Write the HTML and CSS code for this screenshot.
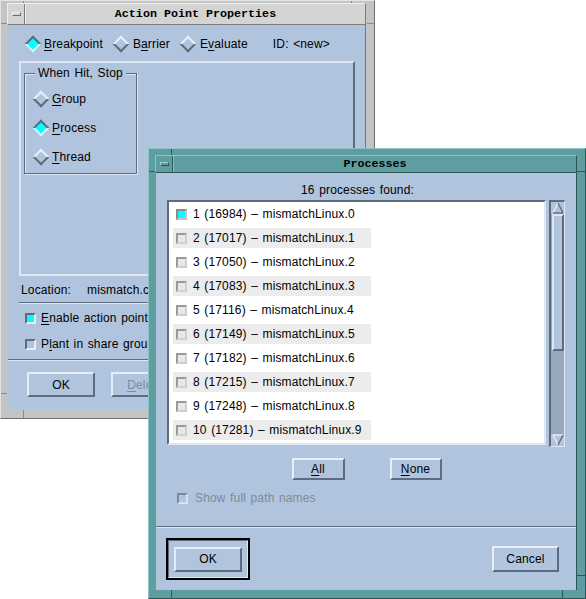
FILE: index.html
```html
<!DOCTYPE html>
<html>
<head>
<meta charset="utf-8">
<title>Action Point Properties</title>
<link rel="stylesheet" href="styles.css">
</head>
<body>
<div class="win win1">
  <span class="tick tk-t1"></span><span class="tick tk-t2"></span>
  <span class="tick tk-l1"></span><span class="tick tk-l2"></span>
  <span class="tick tk-r1"></span><span class="tick tk-b1"></span>
  <div class="titlebar tb1">
    <div class="menubtn"><span class="mbar"></span></div>
    <div class="title">Action Point Properties</div>
  </div>
  <div class="client c1">
    <div class="typerow">
      <div class="radio on"><span class="dia"></span><span><u>B</u>reakpoint</span></div>
      <div class="radio"><span class="dia"></span><span>B<u>a</u>rrier</span></div>
      <div class="radio"><span class="dia"></span><span>E<u>v</u>aluate</span></div>
      <span class="idtxt">ID: &lt;new&gt;</span>
    </div>
    <div class="etched">
      <div class="group">
        <span class="legend">When Hit, Stop</span>
        <div class="radio"><span class="dia"></span><span><u>G</u>roup</span></div>
        <div class="radio on"><span class="dia"></span><span><u>P</u>rocess</span></div>
        <div class="radio"><span class="dia"></span><span><u>T</u>hread</span></div>
      </div>
    </div>
    <div class="loc"><span class="loclbl">Location:</span><span>mismatch.c</span></div>
    <div class="sep sep-short"></div>
    <div class="check on chk-enable"><span class="cb"></span><span><u>E</u>nable action point</span></div>
    <div class="check chk-plant"><span class="cb"></span><span>P<u>l</u>ant in share group</span></div>
    <div class="sep sep-full"></div>
    <div class="btnrow1">
      <button class="btn b-ok1">OK</button>
      <button class="btn b-del dis"><u>D</u>elete</button>
    </div>
  </div>
</div>

<div class="win win2">
  <span class="tick2 t2-t1"></span><span class="tick2 t2-l1"></span>
  <span class="tick2 t2-r1"></span><span class="tick2 t2-b1"></span>
  <span class="tick2 t2-b2"></span><span class="tick2 t2-rb"></span>
  <div class="titlebar tb2">
    <div class="menubtn"><span class="mbar"></span></div>
    <div class="title">Processes</div>
  </div>
  <div class="client c2">
    <div class="found">16 processes found:</div>
    <div class="listwrap">
      <div class="list">
        <div class="row on"><span class="lcb"></span><span>1 (16984) – mismatchLinux.0</span></div>
        <div class="row alt"><span class="lcb"></span><span>2 (17017) – mismatchLinux.1</span></div>
        <div class="row"><span class="lcb"></span><span>3 (17050) – mismatchLinux.2</span></div>
        <div class="row alt"><span class="lcb"></span><span>4 (17083) – mismatchLinux.3</span></div>
        <div class="row"><span class="lcb"></span><span>5 (17116) – mismatchLinux.4</span></div>
        <div class="row alt"><span class="lcb"></span><span>6 (17149) – mismatchLinux.5</span></div>
        <div class="row"><span class="lcb"></span><span>7 (17182) – mismatchLinux.6</span></div>
        <div class="row alt"><span class="lcb"></span><span>8 (17215) – mismatchLinux.7</span></div>
        <div class="row"><span class="lcb"></span><span>9 (17248) – mismatchLinux.8</span></div>
        <div class="row alt"><span class="lcb"></span><span>10 (17281) – mismatchLinux.9</span></div>
      </div>
      <div class="sb">
        <div class="arrow">
          <svg width="12" height="12" viewBox="0 0 12 12"><polygon points="1,11 6,1 11,11" fill="#b0c4de"/><line x1="1" y1="11" x2="6" y2="1" stroke="#e6edf6" stroke-width="1.4"/><line x1="6" y1="1" x2="11" y2="11" stroke="#5e6b7c" stroke-width="1.4"/><line x1="1" y1="11" x2="11" y2="11" stroke="#5e6b7c" stroke-width="1.4"/></svg>
        </div>
        <div class="trough"><div class="thumb"></div></div>
        <div class="arrow">
          <svg width="12" height="12" viewBox="0 0 12 12"><polygon points="1,1 11,1 6,11" fill="#b0c4de"/><line x1="1" y1="1" x2="11" y2="1" stroke="#e6edf6" stroke-width="1.4"/><line x1="1" y1="1" x2="6" y2="11" stroke="#e6edf6" stroke-width="1.4"/><line x1="6" y1="11" x2="11" y2="1" stroke="#5e6b7c" stroke-width="1.4"/></svg>
        </div>
      </div>
    </div>
    <div class="btnrow2">
      <button class="btn b-all"><u>A</u>ll</button>
      <button class="btn b-none"><u>N</u>one</button>
    </div>
    <div class="check dis fullpath"><span class="cb"></span><span>Show full path names</span></div>
    <div class="sep sep-full2"></div>
    <div class="bottom">
      <div class="defbox"><div class="defring"><button class="btn b-ok2">OK</button></div></div>
      <button class="btn b-cancel">Cancel</button>
    </div>
  </div>
</div>
</body>
</html>
```

FILE: styles.css
```css
* { box-sizing: border-box; }

body {
  margin: 0;
  width: 586px;
  height: 599px;
  background: #ffffff;
  font-family: "Liberation Sans", Arial, sans-serif;
  font-size: 12px;
  letter-spacing: 0.15px;
  word-spacing: 1px;
  color: #000;
  overflow: hidden;
  position: relative;
}

u { text-decoration: underline; text-underline-offset: 2px; }

.win { position: absolute; display: flex; flex-direction: column; }

/* ---------- window 1 ---------- */
.win1 {
  left: 0; top: 0;
  width: 375px; height: 419px;
  background: #c4c4c4;
  border: 1px solid;
  border-color: #e4e4e4 #707070 #707070 #e4e4e4;
  padding: 2px 8px 9px 6px;
}

.tick { position: absolute; background: #8a8a8a; }
.tk-t1 { left: 22px; top: 0; width: 1px; height: 2px; }
.tk-t2 { left: 350px; top: 0; width: 1px; height: 2px; }
.tk-l1 { left: 0; top: 22px; width: 6px; height: 1px; }
.tk-l2 { left: 0; top: 392px; width: 6px; height: 1px; }
.tk-r1 { right: 0; top: 22px; width: 7px; height: 1px; }
.tk-b1 { left: 22px; bottom: 0; width: 1px; height: 8px; }

.titlebar {
  display: flex;
  flex: none;
  border: 1px solid;
}
.tb1 {
  height: 22px;
  background: #d4d4d4;
  border-color: #ececec #7c7c7c #7c7c7c #ececec;
}
.menubtn {
  width: 17px;
  flex: none;
  display: flex;
  align-items: center;
  justify-content: center;
  border-right: 1px solid #7c7c7c;
}
.mbar {
  width: 9px; height: 4px;
  border: 1px solid;
  border-color: #f0f0f0 #6c6c6c #6c6c6c #f0f0f0;
}
.title {
  flex: 1;
  text-align: center;
  font-family: "Liberation Mono", "DejaVu Sans Mono", monospace;
  font-weight: bold;
  font-size: 11.7px;
  letter-spacing: 0;
  word-spacing: 0;
  line-height: 20px;
  border-left: 1px solid #ececec;
}

.client {
  background: #b0c4de;
  flex: none;
  display: flex;
  flex-direction: column;
}
.c1 {
  margin-left: 1px;
  height: 384px;
  border-right: 1px solid #6e7a88;
}

.typerow {
  display: flex;
  align-items: center;
  gap: 12px;
  height: 16px;
  margin-top: 11px;
  padding-left: 18px;
}
.idtxt { margin-left: 13px; }

.radio {
  display: flex;
  align-items: center;
  gap: 5px;
  height: 16px;
  white-space: nowrap;
}
.dia {
  width: 13px; height: 13px;
  flex: none;
  display: flex;
  align-items: center;
  justify-content: center;
}
.dia::before {
  content: "";
  width: 8px; height: 8px;
  transform: rotate(45deg);
  border: 2px solid;
  border-color: #e8eef6 #5e6b7c #5e6b7c #e8eef6;
  background: #b0c4de;
}
.radio.on .dia::before {
  border-color: #5e6b7c #e8eef6 #e8eef6 #5e6b7c;
  background: #00ffff;
}

.etched {
  margin: 9px 0 0 11px;
  width: 336px;
  height: 215px;
  border: 2px solid;
  border-color: #dde6f1 #5e6b7c #dde6f1 #dde6f1;
  padding: 10px 0 0 3px;
}
.group {
  position: relative;
  width: 113px;
  height: 101px;
  border: 1px solid #5e6b7c;
  box-shadow: 1px 1px 0 #dde6f1, inset 1px 1px 0 #dde6f1;
  display: flex;
  flex-direction: column;
  gap: 13px;
  padding: 17px 0 0 9px;
}
.legend {
  position: absolute;
  left: 10px;
  top: -8px;
  padding: 0 3px;
  background: #b0c4de;
  line-height: 14px;
  white-space: nowrap;
}

.loc {
  display: flex;
  margin: 7px 0 0 13px;
  height: 14px;
  line-height: 14px;
  white-space: nowrap;
}
.loclbl { width: 66px; }

.sep {
  height: 2px;
  border-top: 1px solid #5e6b7c;
  border-bottom: 1px solid #dde6f1;
  flex: none;
}
.sep-short { margin: 5px 0 0 11px; }

.check {
  display: flex;
  align-items: center;
  gap: 5px;
  height: 14px;
  white-space: nowrap;
}
.chk-enable { margin: 7px 0 0 17px; }
.chk-plant { margin: 12px 0 0 17px; }
.sep-full { margin-top: 8px; }

.cb {
  width: 11px; height: 11px;
  flex: none;
  border: 2px solid;
  border-color: #5e6b7c #e8eef6 #e8eef6 #5e6b7c;
  background: #b0c4de;
}
.check.on .cb { background: #00ffff; }
.check.dis { color: #7f8a99; }
.check.dis .cb { border-color: #7f8a99 #d8e1ec #d8e1ec #7f8a99; }

.btn {
  font-family: "Liberation Sans", Arial, sans-serif;
  font-size: 12px;
  letter-spacing: 0.15px;
  color: #000;
  background: #b0c4de;
  border: 2px solid;
  border-color: #e6edf6 #5e6b7c #5e6b7c #e6edf6;
  padding: 0;
  margin: 0;
  display: flex;
  align-items: center;
  justify-content: center;
  flex: none;
}
.btn.dis { color: #7f8a99; }

.btnrow1 {
  display: flex;
  gap: 16px;
  margin: 11px 0 0 19px;
}
.b-ok1, .b-del { width: 68px; height: 25px; }

/* ---------- window 2 ---------- */
.win2 {
  left: 148px; top: 148px;
  width: 438px; height: 451px;
  background: #5f9ea0;
  border: 1px solid;
  border-color: #8ec3c4 #2c5656 #2c5656 #8ec3c4;
  padding: 6px 8px 8px 6px;
}
.tick2 { position: absolute; background: #2c5656; }
.t2-t1 { left: 22px; top: 0; width: 1px; height: 6px; }
.t2-l1 { left: 0; top: 22px; width: 6px; height: 1px; }
.t2-r1 { right: 0; top: 22px; width: 8px; height: 1px; }
.t2-b1 { left: 22px; bottom: 0; width: 1px; height: 8px; }
.t2-b2 { right: 22px; bottom: 0; width: 1px; height: 8px; }
.t2-rb { right: 0; bottom: 22px; width: 8px; height: 1px; }

.tb2 {
  height: 18px;
  background: #5f9ea0;
  border-color: #8ec3c4 #2c5656 #2c5656 #8ec3c4;
}
.tb2 .menubtn { border-right-color: #2c5656; }
.tb2 .mbar { border-color: #9fd0d0 #2c5656 #2c5656 #9fd0d0; }
.tb2 .title { line-height: 16px; border-left-color: #8ec3c4; }

.c2 {
  margin-left: 1px;
  height: 417px;
  border-right: 1px solid #2c5656;
}

.found {
  margin: 10px 0 0 12px;
  width: 379px;
  text-align: center;
  line-height: 14px;
  height: 14px;
}

.listwrap {
  display: flex;
  gap: 3px;
  margin: 3px 0 0 11px;
  height: 245px;
}
.list {
  width: 379px;
  height: 245px;
  background: #fff;
  border: 2px solid;
  border-color: #5e6b7c #dde6f1 #dde6f1 #5e6b7c;
  padding: 2px 4px;
  display: flex;
  flex-direction: column;
  gap: 4px;
}
.row {
  width: 198px;
  height: 20px;
  display: flex;
  align-items: center;
  gap: 6px;
  padding-left: 3px;
  white-space: nowrap;
  flex: none;
}
.row.alt { background: #ececec; }
.lcb {
  width: 11px; height: 11px;
  flex: none;
  border: 2px solid;
  border-color: #9a9a9a #cfcfcf #cfcfcf #9a9a9a;
  background: #e8e8e8;
}
.row.on .lcb { background: #00ffff; border-color: #8a8a8a #c4c4c4 #c4c4c4 #8a8a8a; }

.sb {
  width: 16px;
  height: 247px;
  border: 2px solid;
  border-color: #5e6b7c #dde6f1 #dde6f1 #5e6b7c;
  border-right-width: 1px;
  border-bottom-width: 1px;
  display: flex;
  flex-direction: column;
  background: #b0c4de;
}
.arrow {
  height: 12px;
  display: flex;
  justify-content: center;
  flex: none;
}
.trough {
  flex: 1;
  background: #97a7be;
  display: flex;
  flex-direction: column;
}
.thumb {
  height: 137px;
  background: #b0c4de;
  border: 2px solid;
  border-color: #dde6f1 #5e6b7c #5e6b7c #dde6f1;
  margin: 0 0 0 1px;
}

.btnrow2 {
  display: flex;
  justify-content: center;
  gap: 45px;
  margin-top: 13px;
  padding-left: 1px;
}
.b-all { width: 53px; height: 22px; }
.b-none { width: 52px; height: 22px; }

.fullpath { margin: 11px 0 0 21px; gap: 7px; }

.sep-full2 { margin-top: 21px; }

.bottom {
  display: flex;
  align-items: center;
  margin-top: 10px;
  padding: 0 17px 0 10px;
}
.defbox {
  width: 84px;
  height: 42px;
  border: 2px solid #000;
  flex: none;
}
.defring {
  width: 100%;
  height: 100%;
  border: 1px solid;
  border-color: #5e6b7c #dde6f1 #dde6f1 #5e6b7c;
  display: flex;
  align-items: center;
  justify-content: center;
}
.b-ok2 { width: 68px; height: 25px; }
.b-cancel { width: 67px; height: 26px; margin-left: auto; }
```
